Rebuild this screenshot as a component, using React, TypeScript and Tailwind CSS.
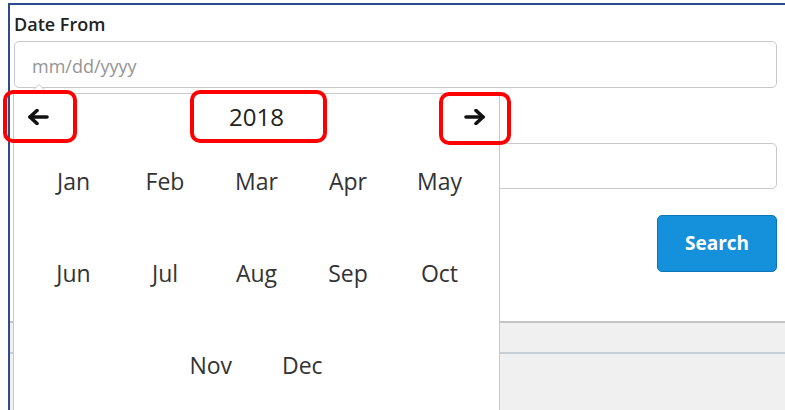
import { useState } from "react";

const MONTHS = ["Jan", "Feb", "Mar", "Apr", "May", "Jun", "Jul", "Aug", "Sep", "Oct", "Nov", "Dec"];

function ArrowIcon({ dir }: { dir: "left" | "right" }) {
  return (
    <svg
      width="22"
      height="16"
      viewBox="0 0 22 16"
      fill="none"
      stroke="#111"
      strokeWidth="3.6"
      strokeLinecap="round"
      strokeLinejoin="round"
      className={dir === "right" ? "-scale-x-100" : ""}
    >
      <path d="M20 8H3" />
      <path d="M10 1.5 3 8l7 6.5" />
    </svg>
  );
}

function MonthPicker() {
  const [year, setYear] = useState(2018);
  return (
    <div className="absolute left-[13px] top-[93px] h-[340px] w-[487px] border border-[#c9c9c9] bg-white">
      {/* caret pointing at the input */}
      <div className="absolute -top-[10px] left-[15px] h-0 w-0 border-x-[10px] border-b-[10px] border-x-transparent border-b-[#c9c9c9]" />
      <div className="absolute -top-[9px] left-[16px] h-0 w-0 border-x-[9px] border-b-[9px] border-x-transparent border-b-white" />

      <div className="flex h-[41px] items-center justify-between px-[13px] pt-[4px]">
        <button type="button" onClick={() => setYear(year - 1)} className="flex h-[30px] items-center">
          <ArrowIcon dir="left" />
        </button>
        <span className="text-[24px] text-[#222]">{year}</span>
        <button type="button" onClick={() => setYear(year + 1)} className="flex h-[30px] items-center">
          <ArrowIcon dir="right" />
        </button>
      </div>

      <div className="flex flex-wrap justify-center">
        {MONTHS.map((m) => (
          <span key={m} className="flex h-[92px] w-[91.5px] items-center justify-center text-[23px] text-[#333]">
            {m}
          </span>
        ))}
      </div>
    </div>
  );
}

export default function App() {
  return (
    <div className="relative h-[410px] w-[785px] overflow-hidden bg-white font-['Open_Sans',sans-serif]">
      <div className="ml-2 mt-[3px] h-[407px] border-l-2 border-t-2 border-[#2d4b88] bg-white">
        <form className="pl-1 pr-2 pt-[5px]">
          <label className="block text-[18px] font-semibold leading-[28px] text-[#222]">Date From</label>
          <input
            placeholder="mm/dd/yyyy"
            className="mt-[3px] block h-[47px] w-full rounded-[5px] border border-[#c8c8c8] px-[17px] pt-[3px] text-[18px] outline-none placeholder:text-[#949494]"
          />
          <label className="mt-[24px] block text-[18px] font-semibold leading-[28px] text-[#222]">Date To</label>
          <input className="mt-[3px] block h-[46px] w-full rounded-[5px] border border-[#c8c8c8] px-[17px] text-[18px] outline-none" />
          <div className="flex justify-end pb-[49px] pt-[26px]">
            <button
              type="button"
              className="h-[57px] w-[120px] rounded-[5px] border border-[#0d76bb] bg-[#1590db] text-[19px] font-bold text-white"
            >
              Search
            </button>
          </div>
        </form>

        <div className="h-[31px] border-t-2 border-[#c4c4c4] bg-[#f0f0f0]" />
        <div className="h-[60px] border-t-2 border-[#c5cfd5] bg-[#f0f0f0]" />
      </div>

      <MonthPicker />

      {/* callouts around the picker controls */}
      <div className="pointer-events-none absolute left-[3px] top-[90px] h-[53px] w-[74px] rounded-[10px] border-4 border-[#ff0000]" />
      <div className="pointer-events-none absolute left-[190px] top-[90px] h-[53px] w-[137px] rounded-[10px] border-4 border-[#ff0000]" />
      <div className="pointer-events-none absolute left-[439px] top-[92px] h-[53px] w-[72px] rounded-[10px] border-4 border-[#ff0000]" />
    </div>
  );
}
